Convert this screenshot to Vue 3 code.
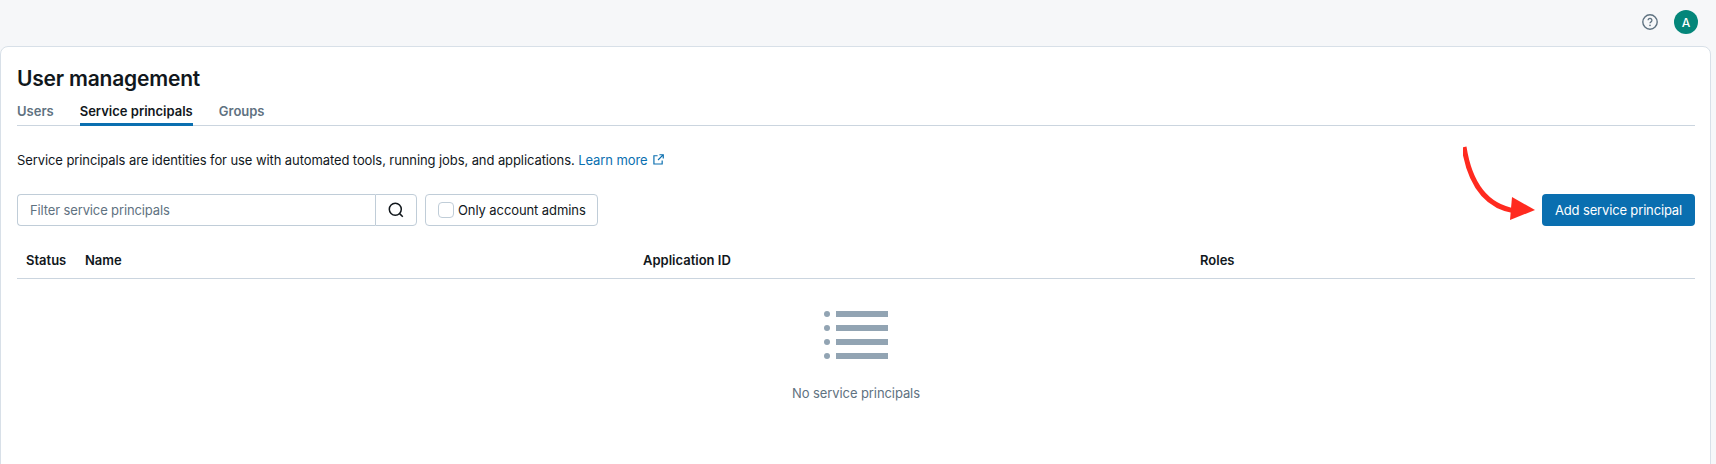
<script setup>
const tabs = [
  { label: 'Users', active: false },
  { label: 'Service principals', active: true },
  { label: 'Groups', active: false },
]
const columns = ['Status', 'Name', 'Application ID', 'Roles']
</script>

<template>
  <div class="page">
    <header class="topbar">
      <svg class="help" width="16" height="16" viewBox="0 0 16 16" fill="none">
        <circle cx="8" cy="8" r="7.2" stroke="#5f7281" stroke-width="1.4" />
        <path d="M6.1 6.3a1.9 1.9 0 1 1 2.9 1.6c-.6.4-1 .7-1 1.4" stroke="#5f7281" stroke-width="1.3" fill="none" />
        <circle cx="8" cy="11.3" r=".85" fill="#5f7281" />
      </svg>
      <div class="avatar">A</div>
    </header>
    <main class="card">
      <h1 class="title">User management</h1>
      <nav class="tabs">
        <span v-for="t in tabs" :key="t.label" class="tab" :class="{ active: t.active }">{{ t.label }}</span>
      </nav>
      <p class="desc">
        Service principals are identities for use with automated tools, running jobs, and applications.
        <a class="link">Learn more
          <svg width="11" height="11" viewBox="0 0 12 12" fill="none" stroke="#0a6fb0" stroke-width="1.3">
            <path d="M5 1.9H1v9h9V7M7 .8h4.2V5M11 1 5.5 6.5" />
          </svg>
        </a>
      </p>
      <div class="toolbar">
        <div class="search">
          <div class="input">Filter service principals</div>
          <div class="search-btn">
            <svg width="16" height="16" viewBox="0 0 16 16" fill="none" stroke="#11171c" stroke-width="1.5">
              <circle cx="7.3" cy="7.3" r="6" />
              <path d="m11.6 11.6 3.2 3.2" />
            </svg>
          </div>
        </div>
        <label class="check">
          <span class="box"></span>
          Only account admins
        </label>
        <button class="primary">Add service principal</button>
      </div>
      <div class="thead">
        <div v-for="c in columns" :key="c" class="th">{{ c }}</div>
      </div>
      <div class="empty">
        <svg width="64" height="48" viewBox="0 0 64 48" fill="#92a4b3">
          <g v-for="y in [0, 14, 28, 42]" :key="y">
            <circle cx="3" :cy="y + 3" r="3" />
            <rect x="12" :y="y" width="52" height="6" />
          </g>
        </svg>
        <div class="empty-text">No service principals</div>
      </div>
      <svg class="arrow" width="90" height="90" viewBox="0 0 90 90" fill="none">
        <path d="M1 1C6 33 20 60 52 65" stroke="#ff2a1f" stroke-width="5" />
        <path d="M49 51 L72 64 L47 74 Z" fill="#ff2a1f" />
      </svg>
    </main>
  </div>
</template>

<style>
html, body { margin: 0; background: #f6f7f9; }
</style>

<style scoped>
.page {
  height: 464px;
  overflow: hidden;
  background: #f6f7f9;
  font-family: Inter, "Liberation Sans", sans-serif;
  color: #11171c;
}
.topbar {
  height: 46px;
  box-sizing: border-box;
  display: flex;
  align-items: center;
  justify-content: flex-end;
  gap: 16px;
  padding: 0 18px 2px 0;
}
.avatar {
  width: 24px;
  height: 24px;
  border-radius: 50%;
  background: #04867a;
  color: #fff;
  font-size: 12px;
  font-weight: 500;
  display: flex;
  align-items: center;
  justify-content: center;
}
.card {
  position: relative;
  margin-right: 5px;
  height: 440px;
  box-sizing: border-box;
  background: #fff;
  border: 1px solid #d8e0e8;
  border-radius: 8px;
  padding: 18px 15px 16px 16px;
}
.title {
  margin: 0;
  font-size: 21px;
  line-height: 28px;
  font-weight: 600;
  letter-spacing: -0.2px;
  color: #11171c;
}
.tabs {
  display: flex;
  gap: 26px;
  margin-top: 4px;
  border-bottom: 1px solid #cbd5df;
  height: 28px;
}
.tab {
  font-size: 13px;
  font-weight: 600;
  line-height: 20px;
  padding-top: 4px;
  height: 22px;
  color: #5f7281;
}
.tab.active {
  color: #11171c;
  border-bottom: 3px solid #0a6fb0;
}
.desc {
  margin: 24px 0 0;
  font-size: 13px;
  line-height: 20px;
  letter-spacing: -0.09px;
  color: #11171c;
}
.link { color: #0a6fb0; }
.link svg { margin-left: 2px; vertical-align: 0; }
.toolbar {
  display: flex;
  align-items: center;
  margin-top: 24px;
  height: 32px;
}
.search { display: flex; height: 32px; }
.input {
  width: 358px;
  box-sizing: border-box;
  border: 1px solid #c0cdd8;
  border-right: none;
  border-radius: 4px 0 0 4px;
  padding: 0 12px;
  font-size: 13px;
  line-height: 30px;
  letter-spacing: -0.13px;
  color: #5f7281;
}
.search-btn {
  width: 42px;
  box-sizing: border-box;
  border: 1px solid #c0cdd8;
  border-radius: 0 4px 4px 0;
  display: flex;
  align-items: center;
  justify-content: center;
}
.check {
  margin-left: 8px;
  width: 173px;
  height: 32px;
  box-sizing: border-box;
  border: 1px solid #c0cdd8;
  border-radius: 4px;
  display: flex;
  align-items: center;
  gap: 4px;
  padding-left: 12px;
  font-size: 13px;
  letter-spacing: -0.09px;
  color: #11171c;
}
.box {
  width: 16px;
  height: 16px;
  box-sizing: border-box;
  border: 1px solid #c0cdd8;
  border-radius: 4px;
}
.primary {
  margin-left: auto;
  width: 153px;
  height: 32px;
  border: none;
  border-radius: 4px;
  background: #0a6fb0;
  color: #fff;
  font: 400 13px Inter, "Liberation Sans", sans-serif;
  letter-spacing: -0.15px;
}
.thead {
  display: grid;
  grid-template-columns: 59px 558px 557px 1fr;
  margin-top: 18px;
  height: 34px;
  border-bottom: 1px solid #cbd5df;
}
.th {
  padding: 6px 8px 0 9px;
  font-size: 13px;
  line-height: 20px;
  font-weight: 600;
}
.empty {
  display: flex;
  flex-direction: column;
  align-items: center;
  padding-top: 32px;
}
.empty svg { display: block; }
.empty-text {
  margin-top: 24px;
  font-size: 13px;
  line-height: 20px;
  letter-spacing: -0.09px;
  color: #5f7281;
}
.arrow {
  position: absolute;
  left: 1462px;
  top: 99px;
}
</style>
